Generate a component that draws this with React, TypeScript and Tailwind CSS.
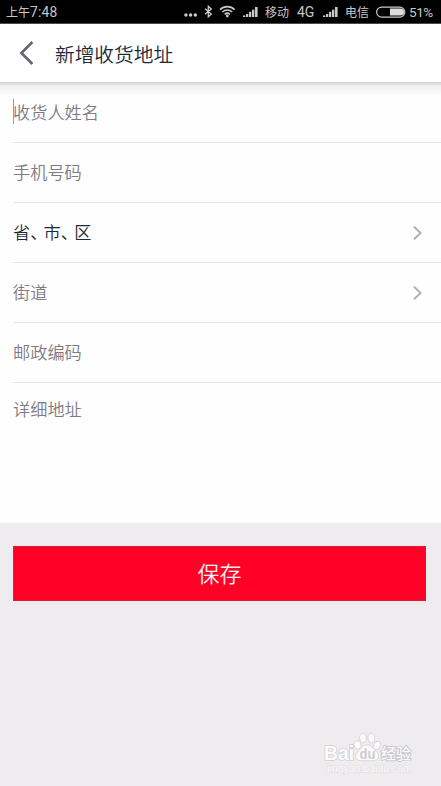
import React from 'react';

const SignalIcon: React.FC = () => (
  <svg width="16" height="12" viewBox="0 0 16 12" fill="#c9c9c9" className="shrink-0">
    <rect x="0" y="9.4" width="2.3" height="1.6" />
    <rect x="3" y="8" width="2.3" height="3" />
    <rect x="6" y="5.8" width="2.3" height="5.2" />
    <rect x="9" y="3.6" width="2.3" height="7.4" />
    <rect x="12" y="1" width="2.6" height="10" />
  </svg>
);

const StatusBar: React.FC = () => (
  <div className="flex h-6 items-center border-b border-[#4a4a4a] bg-black pl-[6px] text-[12px] leading-6 text-[#c6c6c6]">
    <span className="w-[178px] shrink-0 whitespace-nowrap">
      上午<span className="font-[Roboto] text-[13.8px] tracking-[0.2px]">7:48</span>
    </span>
    <svg width="14" height="12" viewBox="0 0 14 12" fill="#c9c9c9" className="shrink-0">
      <circle cx="1.9" cy="9" r="1.7" />
      <circle cx="6.6" cy="9" r="1.7" />
      <circle cx="11.3" cy="9" r="1.7" />
    </svg>
    <svg width="9" height="13" viewBox="0 0 9 13" fill="none" stroke="#c9c9c9" strokeWidth="1.3" className="ml-[6px] shrink-0">
      <path d="M1 3.7 7.3 9 4.3 11.8V1.2L7.3 4 1 9.3" />
    </svg>
    <svg width="17" height="13" viewBox="0 0 17 13" fill="none" stroke="#c9c9c9" strokeWidth="1.6" className="ml-[6px] shrink-0">
      <path d="M1 4.6C5.2.6 11.4.6 15.6 4.6M3.4 7C6.2 4.3 10.4 4.3 13.2 7M5.7 9.3C7.3 7.9 9.3 7.9 10.9 9.3" />
      <circle cx="8.3" cy="11" r="1.4" fill="#c9c9c9" stroke="none" />
    </svg>
    <span className="ml-[7px] flex">
      <SignalIcon />
    </span>
    <span className="ml-[6px] w-[31px] shrink-0 whitespace-nowrap">移动</span>
    <span className="w-[27px] shrink-0 pl-px font-[Roboto] text-[14px]">4G</span>
    <SignalIcon />
    <span className="ml-[6px] w-[31px] shrink-0 whitespace-nowrap">电信</span>
    <svg width="30" height="12" viewBox="0 0 30 12" className="shrink-0">
      <rect x="0.6" y="1.1" width="28.2" height="10" rx="5" fill="none" stroke="#c9c9c9" strokeWidth="1.2" />
      <path d="M14 2.6H24.5A3.5 3.5 0 0 1 24.5 9.6H14Z" fill="#dedede" />
    </svg>
    <span className="ml-[3px] font-[Roboto] text-[13.5px] tracking-[-0.4px]">51%</span>
  </div>
);

const Header: React.FC = () => (
  <header className="flex h-[58px] items-center bg-white pl-[19px]">
    <svg width="16" height="26" viewBox="0 0 16 26" fill="none" stroke="#65656d" strokeWidth="2.6" className="shrink-0">
      <path d="M13.4 2 2.4 13 13.4 24" />
    </svg>
    <h1 className="ml-[20px] pt-[2px] text-[19.7px] font-[350] leading-6 text-[#1c2a36]">新增收货地址</h1>
  </header>
);

interface FieldRowProps {
  children: React.ReactNode;
  arrow?: boolean;
}

const FieldRow: React.FC<FieldRowProps> = ({ children, arrow }) => (
  <div className="ml-[13px] flex h-[60px] items-center justify-between border-b border-[#e6e5e7] pr-[18px] text-[17.2px] font-[350] text-[#7e7c83]">
    <div className="flex items-center pb-px">{children}</div>
    {arrow && (
      <svg width="11" height="16" viewBox="0 0 11 16" fill="none" stroke="#b0aeb3" strokeWidth="1.9">
        <path d="M2 1.7 8.6 8 2 14.3" />
      </svg>
    )}
  </div>
);

const Watermark: React.FC = () => (
  <div className="absolute left-[323px] top-[731px] h-[46px] w-[92px]">
    <svg width="92" height="46" viewBox="0 0 92 46" fill="#fcfbfc" stroke="#d0cfd4" strokeWidth="0.8">
      <ellipse cx="34.5" cy="14" rx="3.4" ry="4.3" transform="rotate(-15 34.5 14)" />
      <ellipse cx="40" cy="6.9" rx="3.3" ry="4.6" />
      <ellipse cx="48.3" cy="6.9" rx="3.3" ry="4.6" />
      <ellipse cx="54" cy="14.5" rx="3.3" ry="4.3" transform="rotate(18 54 14.5)" />
      <path d="M44 14C39.5 14 39 17.5 35.5 20C31 23.5 32 29.7 38 29.7H50C56.5 29.7 57 23.5 52.8 20C49 17 48.5 14 44 14Z" />
      <g fontFamily="'Liberation Sans', 'Noto Sans CJK SC', sans-serif">
        <text x="1" y="28.5" fontSize="20" fontWeight="700" paintOrder="stroke" strokeWidth="1.6" textLength="30" lengthAdjust="spacingAndGlyphs">Bai</text>
        <text x="36.5" y="27.5" fontSize="14" fontWeight="700" fill="#cccbd0" stroke="none" textLength="16" lengthAdjust="spacingAndGlyphs">du</text>
        <text x="58" y="27.5" fontSize="15" fontWeight="500" paintOrder="stroke" stroke="#c8c7cc" strokeWidth="1.8" textLength="30">经验</text>
        <text x="4" y="41" fontSize="10" paintOrder="stroke" strokeWidth="0.9" stroke="#dedde1" textLength="85" lengthAdjust="spacingAndGlyphs">jingyan.baidu.com</text>
      </g>
    </svg>
  </div>
);

const App: React.FC = () => (
  <div className="relative flex h-[786px] w-[441px] flex-col overflow-hidden bg-[#eeecef] font-['Noto_Sans_CJK_SC',sans-serif]">
    <StatusBar />
    <Header />
    <main className="h-[441px] shrink-0 bg-[#fefefe]">
      <div className="-mb-[14px] h-[15px] bg-linear-to-b from-[#d0ced2] via-[#f1eff2] via-25% to-[#fefefe]" />
      <FieldRow>
        <span className="h-[25px] w-px bg-[#9a989e]" />
        <span className="-ml-px">收货人姓名</span>
      </FieldRow>
      <FieldRow>手机号码</FieldRow>
      <FieldRow arrow>
        <span className="text-[#1c2a36]">
          省<span className="tracking-[-3.8px]">、</span>市<span className="tracking-[-3.8px]">、</span>区
        </span>
      </FieldRow>
      <FieldRow arrow>街道</FieldRow>
      <FieldRow>邮政编码</FieldRow>
      <div className="pl-[13px] pt-[13px] text-[17.2px] font-[350] leading-[25px] text-[#7e7c83]">详细地址</div>
    </main>
    <button className="ml-[13px] mt-[23px] h-[55px] w-[413px] shrink-0 border border-[#e21a38] bg-[#ff0026] pb-[2px] text-[22px] font-[350] text-[#fff0f2]">
      保存
    </button>
    <Watermark />
  </div>
);

export default App;
